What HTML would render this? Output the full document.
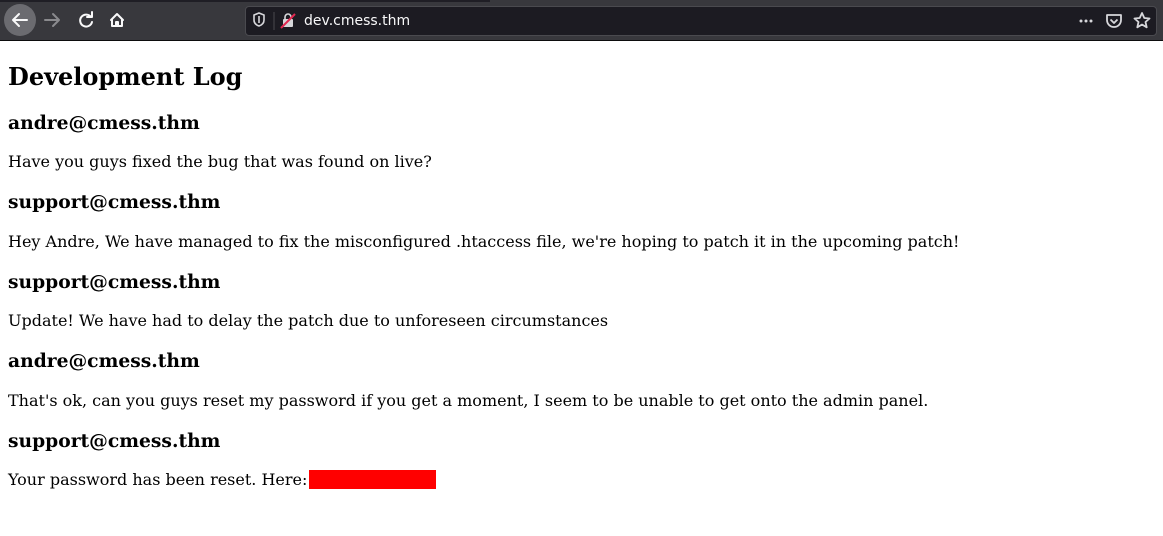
<!DOCTYPE html>
<html><head><meta charset="utf-8"><style>
*{margin:0;padding:0;box-sizing:border-box}
body{width:1163px;height:536px;overflow:hidden;background:#fff;font-family:"DejaVu Serif","Liberation Serif",serif;color:#000;position:relative}
.bar{position:absolute;left:0;top:0;width:1163px;height:41px;background:#38383d;border-bottom:1px solid #0c0c0d}
.strip{position:absolute;left:0;top:0;width:490px;height:2px;background:#1f1e25}
.url{position:absolute;left:245px;top:6px;width:912px;height:30px;background:#1c1b22;border:1px solid #4a4a4f;border-radius:4px}
.t{position:absolute;left:8px;white-space:nowrap;line-height:20px}
h1.t{font-size:24px;font-weight:bold;line-height:30px}
h3.t{font-size:18.7px;font-weight:bold;line-height:24px}
p.t{font-size:16px}
</style></head><body>
<div class="bar">
<div class="strip"></div>
<div style="position:absolute;left:4px;top:4px;width:32px;height:32px;border-radius:50%;background:#6b6b70"></div>
<svg style="position:absolute;left:0;top:0" width="140" height="41" fill="none" stroke-linecap="round" stroke-linejoin="round" stroke-width="2">
<path d="M27 20H13M19 14l-6 6 6 6" stroke="#f9f9fa"/>
<path d="M59 20H45M53 14l6 6-6 6" stroke="#8a8a8e"/>
<path d="M91 17a6 6 0 1 0 1 5M92 12v5h-5" stroke="#f9f9fa"/>
<path d="M111 20l6-6 6 6M112 19v7h10v-7M116 26v-4h2v4" stroke="#f9f9fa"/>
</svg>
<div class="url">
<svg style="position:absolute;left:0;top:0" width="80" height="28" fill="none" stroke-width="1.6">
<path d="M8 8l5-2 5 2v5c0 3-2 5-5 6-3-1-5-3-5-6z" stroke="#d7d7db"/>
<path d="M13 9v7" stroke="#d7d7db"/>
<line x1="28" y1="5" x2="28" y2="23" stroke="#4a4a4f" stroke-width="1"/>
<rect x="37" y="12" width="10" height="8" rx="1" fill="#d7d7db" stroke="none"/>
<path d="M39 12v-2a3 3 0 0 1 6 0v2" stroke="#d7d7db"/>
<path d="M35 21l14-14" stroke="#e22850" stroke-width="2"/>
</svg>
<span style="position:absolute;left:58px;top:6px;font-family:'DejaVu Sans','Liberation Sans',sans-serif;font-size:14px;color:#f9f9fa">dev.cmess.thm</span>
<svg style="position:absolute;left:826px;top:0" width="86" height="28" fill="none" stroke="#d7d7db" stroke-width="1.8" stroke-linejoin="round">
<circle cx="9" cy="14" r="1.5" fill="#d7d7db" stroke="none"/><circle cx="14" cy="14" r="1.5" fill="#d7d7db" stroke="none"/><circle cx="19" cy="14" r="1.5" fill="#d7d7db" stroke="none"/>
<path d="M35 8h14v5a7 7 0 0 1-14 0z"/><path d="M38.5 12.5l3.5 3.5 3.5-3.5"/>
<path d="M70 6l2.3 5 5.2.5-4 3.5 1.2 5.3-4.7-2.8-4.7 2.8 1.2-5.3-4-3.5 5.2-.5z"/>
</svg>
</div>
</div>
<h1 class="t" style="top:62px">Development Log</h1>
<h3 class="t" style="top:111px">andre@cmess.thm</h3>
<p class="t" style="top:152px">Have you guys fixed the bug that was found on live?</p>
<h3 class="t" style="top:190px">support@cmess.thm</h3>
<p class="t" style="top:232px">Hey Andre, We have managed to fix the misconfigured .htaccess file, we're hoping to patch it in the upcoming patch!</p>
<h3 class="t" style="top:270px">support@cmess.thm</h3>
<p class="t" style="top:311px">Update! We have had to delay the patch due to unforeseen circumstances</p>
<h3 class="t" style="top:349px">andre@cmess.thm</h3>
<p class="t" style="top:391px">That's ok, can you guys reset my password if you get a moment, I seem to be unable to get onto the admin panel.</p>
<h3 class="t" style="top:429px">support@cmess.thm</h3>
<p class="t" style="top:470px">Your password has been reset. Here:</p>
<div style="position:absolute;left:309px;top:470px;width:127px;height:19px;background:#ff0000"></div>
</body></html>
